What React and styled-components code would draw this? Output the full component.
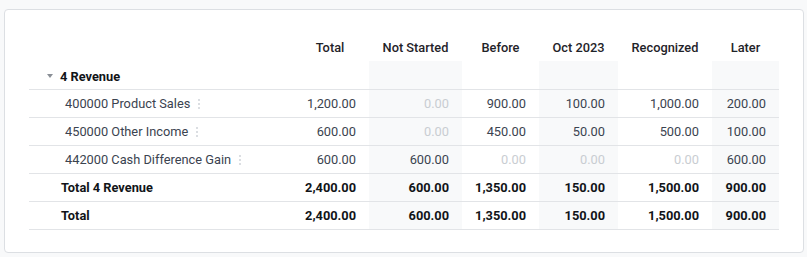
import React from "react";
import styled, { createGlobalStyle } from "styled-components";

const Global = createGlobalStyle`
  html, body { margin: 0; padding: 0; background: #f8f9fa; }
  body { font-family: Roboto, "Noto Sans", Arial, sans-serif; }
`;

const Page = styled.div`
  padding: 9px 3px 2px 4px;
`;

const Card = styled.div`
  background: #fff;
  border: 1px solid #dcdfe3;
  border-radius: 4px;
  padding: 23px 23px 24px 24px;
  height: 244px;
  box-sizing: border-box;
`;

const Table = styled.table`
  border-collapse: collapse;
  table-layout: fixed;
  width: 750px;
  font-size: 12.8px;
`;

const Th = styled.th`
  height: 28px;
  padding: 0;
  font-weight: 500;
  color: #1f2329;
  text-align: center;
  vertical-align: middle;
`;

const Row = styled.tr`
  border-bottom: 1px solid #e2e4e7;
`;

const Td = styled.td`
  height: ${(p) => (p.$tall ? 28 : 27)}px;
  padding: 0 13px 0 0;
  text-align: right;
  vertical-align: middle;
  white-space: nowrap;
  background: ${(p) => (p.$shade ? "#f8f9fa" : "transparent")};
  color: ${(p) => (p.$zero ? "#c9cdd2" : p.$bold ? "#111418" : "#3b4350")};
  font-weight: ${(p) => (p.$bold ? 700 : 400)};
`;

const LabelCell = styled.td`
  height: ${(p) => (p.$tall ? 28 : 27)}px;
  padding: 0 0 0 ${(p) => p.$indent}px;
  text-align: left;
  vertical-align: middle;
  white-space: nowrap;
  color: ${(p) => (p.$bold ? "#111418" : "#3b4350")};
  font-weight: ${(p) => (p.$bold ? 700 : 400)};
`;

const LabelInner = styled.span`
  display: inline-flex;
  align-items: center;
`;

const Caret = styled.span`
  display: inline-block;
  width: 0;
  height: 0;
  border-left: 3.5px solid transparent;
  border-right: 3.5px solid transparent;
  border-top: 4px solid #8a8f96;
  margin-right: 7px;
`;

const Dots = styled.span`
  display: inline-flex;
  flex-direction: column;
  gap: 2px;
  margin-left: 8px;
  span {
    width: 2px;
    height: 2px;
    border-radius: 1px;
    background: #cfd3d8;
  }
`;

const cols = [
  { key: "total", label: "Total", width: 78, shade: false },
  { key: "ns", label: "Not Started", width: 93, shade: true },
  { key: "before", label: "Before", width: 77, shade: false },
  { key: "oct", label: "Oct 2023", width: 79, shade: true },
  { key: "rec", label: "Recognized", width: 94, shade: false },
  { key: "later", label: "Later", width: 67, shade: true },
];

const rows = [
  { label: "400000 Product Sales", vals: ["1,200.00", "0.00", "900.00", "100.00", "1,000.00", "200.00"] },
  { label: "450000 Other Income", vals: ["600.00", "0.00", "450.00", "50.00", "500.00", "100.00"] },
  { label: "442000 Cash Difference Gain", vals: ["600.00", "600.00", "0.00", "0.00", "0.00", "600.00"] },
];

const totals = [
  { label: "Total 4 Revenue", vals: ["2,400.00", "600.00", "1,350.00", "150.00", "1,500.00", "900.00"] },
  { label: "Total", vals: ["2,400.00", "600.00", "1,350.00", "150.00", "1,500.00", "900.00"] },
];

export default function App() {
  return (
    <>
      <Global />
      <Page>
        <Card>
          <Table>
            <colgroup>
              <col style={{ width: 262 }} />
              {cols.map((c) => (
                <col key={c.key} style={{ width: c.width }} />
              ))}
            </colgroup>
            <thead>
              <tr>
                <Th />
                {cols.map((c) => (
                  <Th key={c.key}>{c.label}</Th>
                ))}
              </tr>
            </thead>
            <tbody>
              <Row>
                <LabelCell $indent={18} $bold $tall>
                  <LabelInner>
                    <Caret />
                    4 Revenue
                  </LabelInner>
                </LabelCell>
                {cols.map((c) => (
                  <Td key={c.key} $shade={c.shade} $tall />
                ))}
              </Row>
              {rows.map((r) => (
                <Row key={r.label}>
                  <LabelCell $indent={36}>
                    <LabelInner>
                      {r.label}
                      <Dots>
                        <span />
                        <span />
                        <span />
                      </Dots>
                    </LabelInner>
                  </LabelCell>
                  {r.vals.map((v, i) => (
                    <Td key={i} $shade={cols[i].shade} $zero={v === "0.00"}>
                      {v}
                    </Td>
                  ))}
                </Row>
              ))}
              {totals.map((r) => (
                <Row key={r.label}>
                  <LabelCell $indent={32} $bold>
                    {r.label}
                  </LabelCell>
                  {r.vals.map((v, i) => (
                    <Td key={i} $shade={cols[i].shade} $bold>
                      {v}
                    </Td>
                  ))}
                </Row>
              ))}
            </tbody>
          </Table>
        </Card>
      </Page>
    </>
  );
}
